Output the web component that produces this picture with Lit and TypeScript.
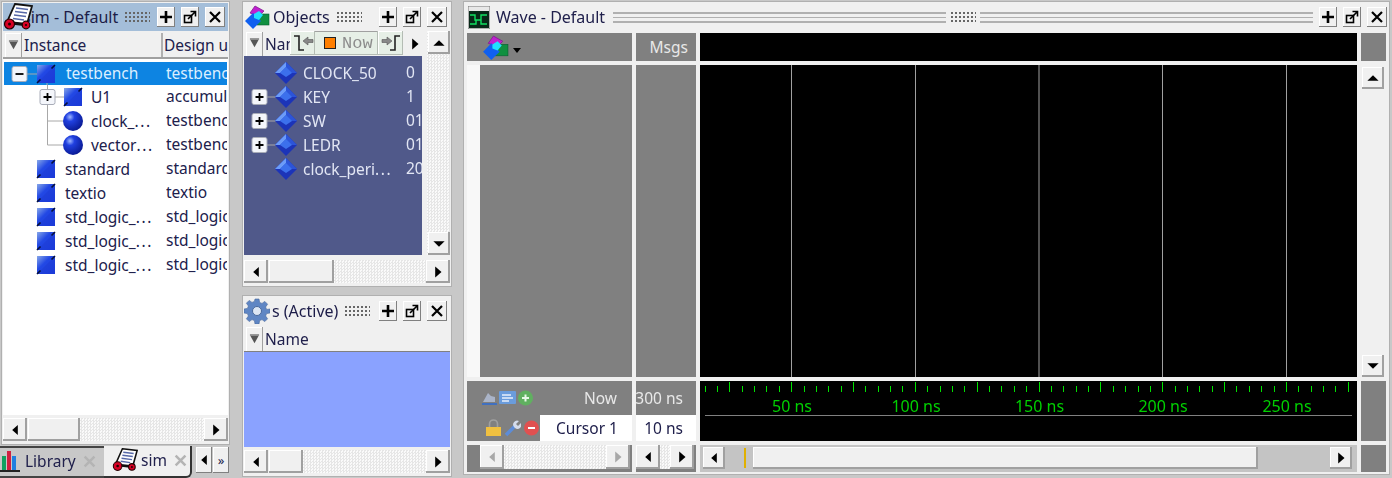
import { LitElement, html, css, svg } from "lit";
import { customElement } from "lit/decorators.js";

const ARROWS: Record<string, string> = {
  l: "M7 1.5 L3 5 L7 8.5 Z",
  r: "M3 1 L7.5 5 L3 9 Z",
  u: "M1 7 L5 3 L9 7 Z",
  d: "M1 3 L5 7 L9 3 Z",
};
const arr = (d: string, off = false) =>
  html`<svg class="arr ${off ? "off" : ""}" viewBox="0 0 10 10"><path d=${ARROWS[d]}></path></svg>`;

const btn = (d: string, off = false) => html`<div class="btn">${arr(d, off)}</div>`;

const hbar = (thumb: number, cls = "") =>
  html`<div class="hbar ${cls}">${btn("l")}<div class="thumb" style="width:${thumb}px"></div><div class="track"></div>${btn("r")}</div>`;

const winBtns = () => html`
  <div class="wb"><svg viewBox="0 0 16 16"><path d="M8 2v12M2 8h12" stroke="#000" stroke-width="2.6" fill="none"></path></svg></div>
  <div class="wb"><svg viewBox="0 0 16 16"><rect x="2.5" y="6.5" width="7" height="7" fill="none" stroke="#000" stroke-width="1.6"></rect><path d="M6 10 L13 3 M8.5 2.5h5v5" stroke="#000" stroke-width="1.6" fill="none"></path></svg></div>
  <div class="wb"><svg viewBox="0 0 16 16"><path d="M3 3 L13 13 M13 3 L3 13" stroke="#000" stroke-width="2.2" fill="none"></path></svg></div>`;

const simGlyph = () => svg`
  <path d="M12 2 L29 4 L24 22 L4 20 Z" fill="#fff" stroke="#111" stroke-width="1.8"></path>
  <path d="M13 6l12 1.5M12 9.5l12 1.5M11 13l12 1.5M10 16.5l11 1.5" stroke="#5668a8" stroke-width="1.6"></path>
  <path d="M6 21 L23 23" stroke="#111" stroke-width="2.4"></path>
  <circle cx="6.5" cy="22" r="5" fill="#d80024" stroke="#200" stroke-width="1.2"></circle><circle cx="6.5" cy="22" r="1.5" fill="#200"></circle>
  <circle cx="23" cy="23" r="3.8" fill="#d80024" stroke="#200" stroke-width="1.2"></circle><circle cx="23" cy="23" r="1.1" fill="#200"></circle>`;

const simIcon = () => html`<svg class="ic30" viewBox="0 0 30 30">${simGlyph()}</svg>`;

const objIcon = (cls = "ic26") => html`<svg class=${cls} viewBox="0 0 26 26">
  <path d="M6 9 L11 2 L20 7 L15 12 Z" fill="#c020d0" stroke="#802090" stroke-width=".8"></path>
  <rect x="13" y="10" width="12" height="11" fill="#109040" stroke="#086030" stroke-width=".6"></rect>
  <path d="M1 17 L9 9 L17 17 L9 25 Z" fill="#1060f0"></path>
  <path d="M10 10 L15 7 L19 11 L15 16 L10 14 Z" fill="#20e0ff"></path>
</svg>`;

const gearIcon = () => html`<svg class="ic26" viewBox="0 0 26 26">
  <g fill="#5f86c4" stroke="#48689c" stroke-width=".6">
    <path d="M11 1h4l.6 3.4 2.4 1 2.8-2 2.8 2.8-2 2.8 1 2.4L26 11v4l-3.4.6-1 2.4 2 2.8-2.8 2.8-2.8-2-2.4 1L15 26h-4l-.6-3.4-2.4-1-2.8 2-2.8-2.8 2-2.8-1-2.4L0 15v-4l3.4-.6 1-2.4-2-2.8 2.8-2.8 2.8 2 2.4-1z"></path>
  </g>
  <circle cx="13" cy="13" r="4.5" fill="#dce6f4" stroke="#48689c"></circle>
</svg>`;

const grip = () => html`<div class="grip"></div>`;

const dropBtn = () => html`<div class="drop"><svg viewBox="0 0 12 12"><path d="M1 1h10L6 10z" fill="#555"></path><path d="M1 1h10" stroke="#999" stroke-width="2"></path></svg></div>`;

const expander = (cx: number, cy: number, plus: boolean) => svg`
  <rect x=${cx - 7.5} y=${cy - 7.5} width="15" height="15" rx="2" fill="#f4f6fb" stroke="#a8acb8"></rect>
  <path d=${plus ? `M${cx - 4} ${cy}h8M${cx} ${cy - 4}v8` : `M${cx - 4} ${cy}h8`} stroke="#000" stroke-width="1.8"></path>`;

const square = (x: number) => svg`
  <rect x=${x} y="3" width="18" height="18" fill="url(#sq)"></rect>
  <path d="M${x + 18} 3v18h-18z" fill="#1a34c8" opacity=".3"></path>
  <path d="M${x} 21l3.5-3.5M${x + 18} 3l-3.5 3.5" stroke="#06103c" stroke-width="1.6"></path>`;

const sphere = (x: number) => svg`
  <circle cx=${x + 10} cy="12" r="10" fill="url(#sph)"></circle>`;

const diamond = (x: number) => svg`
  <path d="M${x + 11} 1 L${x + 22} 12 L${x + 11} 23 L${x} 12 Z" fill="#1c34b8"></path>
  <path d="M${x + 11} 1 L${x + 22} 12 H${x} Z" fill="#2c54d8"></path>
  <path d="M${x + 11} 1 L${x + 11} 6 L${x + 5} 12 H${x} Z" fill="#6c9cf8"></path>
  <path d="M${x + 11} 6 L${x + 17} 12 L${x + 11} 16 L${x + 5} 12 Z" fill="#3c70ec"></path>`;

const LINE = "#a8a8a8";

const label = (name: string) => {
  const [stem, rest] = name.split("…");
  return rest === undefined ? name : html`${stem}<span class="el">...</span>`;
};

interface TreeRow { g: number; draw: unknown; name: string; design: string; sel?: boolean }

const treeRows: TreeRow[] = [
  { g: 62, sel: true, name: "testbench", design: "testbench", draw: svg`
    <path d="M23 12h12M43 20v4" stroke=${LINE} fill="none"></path>${expander(15.5, 12, false)}${square(33)}` },
  { g: 87, name: "U1", design: "accumulator", draw: svg`
    <path d="M43.5 0v24M50 12h10" stroke=${LINE} fill="none"></path>${expander(43.5, 12, true)}${square(60)}` },
  { g: 87, name: "clock_…", design: "testbench", draw: svg`
    <path d="M43.5 0v24M43.5 12h16" stroke=${LINE} fill="none"></path>${sphere(59)}` },
  { g: 87, name: "vector…", design: "testbench", draw: svg`
    <path d="M43.5 0v12h16" stroke=${LINE} fill="none"></path>${sphere(59)}` },
  { g: 61, name: "standard", design: "standard", draw: square(33) },
  { g: 61, name: "textio", design: "textio", draw: square(33) },
  { g: 61, name: "std_logic_…", design: "std_logic_1164", draw: square(33) },
  { g: 61, name: "std_logic_…", design: "std_logic_arith", draw: square(33) },
  { g: 61, name: "std_logic_…", design: "std_logic_unsigned", draw: square(33) },
];

const objRows = [
  { n: "CLOCK_50", v: "0", e: false },
  { n: "KEY", v: "1", e: true },
  { n: "SW", v: "01", e: true },
  { n: "LEDR", v: "01", e: true },
  { n: "clock_peri…", v: "20", e: false },
];

const GRID = [791, 915, 1038.5, 1162, 1286];
const WAVE_X = 700;

const ticks = () => {
  const out: unknown[] = [];
  for (let i = 0; i < 53; i++) {
    const x = 729.3 - 2 * 12.37 + i * 12.37 - WAVE_X;
    const major = (i - 2) % 5 === 0;
    out.push(svg`<path d="M${Math.round(x) + 0.5} ${major ? 1 : 5}V11" stroke="#00e000" fill="none"></path>`);
  }
  return out;
};

@customElement("app-root")
export class AppRoot extends LitElement {
  static styles = css`
    :host { display: block; width: 1392px; height: 478px; overflow: hidden; background: #c8c8c8; font: 15.5px "Noto Sans", sans-serif; color: #20204c; }
    * { box-sizing: border-box; }
    .root { display: flex; height: 478px; filter: blur(0.45px); }
    .el { letter-spacing: 1.6px; }
    .left { width: 230px; flex: none; display: flex; flex-direction: column; margin-right: 12px; padding: 1px 0 0 1px; }
    .mid { width: 210px; flex: none; display: flex; flex-direction: column; margin-right: 11px; padding-top: 1px; }
    .panel { border: 1px solid #b0b0b0; background: #f0f0f0; padding: 1px; display: flex; flex-direction: column; overflow: hidden; flex: none; }
    .p-sim { height: 444px; }
    .p-obj { height: 286px; margin-bottom: 8px; }
    .p-proc { height: 182px; }
    .title { height: 28px; flex: none; display: flex; align-items: center; padding-right: 3px; }
    .title.act { background: #a4bed9; }
    .title .txt { white-space: nowrap; color: #1c1c48; font-size: 16px; }
    .ic30 { width: 30px; height: 30px; flex: none; position: relative; z-index: 1; }
    .ic26 { width: 26px; height: 26px; flex: none; }
    .grip { width: 26px; height: 12px; flex: none; background-image: radial-gradient(circle, #666 0.8px, transparent 1px); background-size: 4px 4px; margin: 0 1px 0 6px; }
    .wb { width: 18px; height: 20px; margin-left: 6px; flex: none; background: #f0f0f0; box-shadow: inset -1px -1px 0 #808080, inset 1px 1px 0 #fff; display: flex; align-items: center; justify-content: center; }
    .wb:last-child { width: 20px; }
    .wb svg { width: 16px; height: 16px; }
    .spring { flex: 1; }
    .head { height: 26px; flex: none; display: flex; align-items: center; background: #f0f0f0; border-bottom: 2px solid #a0a0a0; margin-top: 2px; position: relative; overflow: hidden; }
    .drop { width: 17px; height: 24px; flex: none; display: flex; align-items: center; justify-content: center; box-shadow: inset -1px 0 0 #a0a0a0, inset 1px 1px 0 #fff; margin: 0 2px 0 2px; }
    .drop svg { width: 11px; height: 11px; }
    .hcell { white-space: nowrap; flex: none; }
    .hsep { border-left: 2px solid #b0b0b0; height: 24px; flex: none; }
    .tree { flex: 1; min-height: 0; background: #fff; padding: 3px 1px 0 1px; overflow: hidden; }
    .row { display: grid; grid-template-columns: 162px 1fr; height: 24px; line-height: 23px; white-space: nowrap; overflow: hidden; }
    .row.sel { background: #0d84e2; color: #dbeeff; height: 23px; }
    .row .n { display: flex; align-items: center; overflow: hidden; }
    .row svg { height: 24px; flex: none; }
    .row .d { overflow: hidden; }
    .hbar { height: 23px; flex: none; display: flex; margin-top: 3px; margin-bottom: 2px; }
    .btn { width: 24px; height: 23px; flex: none; background: #f0f0f0; box-shadow: inset -2px -2px 0 #a0a0a0, inset 1px 1px 0 #fff; display: flex; align-items: center; justify-content: center; }
    .thumb { flex: none; height: 23px; margin-left: 1px; background: #f0f0f0; box-shadow: inset -2px -2px 0 #a0a0a0, inset 1px 1px 0 #fff; }
    .track { flex: 1; background-color: #f4f4f4; background-image: repeating-conic-gradient(#e6e6e6 0 25%, #fafafa 0 50%); background-size: 3px 3px; }
    .arr { width: 14px; height: 14px; fill: #000; }
    .arr.off { fill: #a8a8a8; }
    .tabs { flex: 1; min-height: 0; overflow: hidden; display: flex; align-items: stretch; margin: 1px 0 0 -1px; }
    .tab { display: flex; align-items: center; gap: 3px; white-space: nowrap; padding-bottom: 3px; }
    .tab.a { width: 104px; background: #c8c8c8; border-top: 2px solid #444; border-bottom: 2px solid #444; }
    .tab.b { width: 88px; background: #f0f0f0; border-right: 2px solid #333; border-bottom: 2px solid #333; border-radius: 0 0 6px 0; padding-left: 8px; }
    .tab .x { color: #b4b4b4; font-size: 18px; font-weight: 700; margin-left: 3px; line-height: 1; }
    .tabbtns { display: flex; gap: 1px; margin: 1px 0 5px 4px; }
    .tabbtns div { width: 16px; background: #f0f0f0; box-shadow: inset -1px -1px 0 #808080, inset 1px 1px 0 #fff; display: flex; align-items: center; justify-content: center; font-size: 13px; }
    .objwrap { flex: 1; display: flex; min-height: 0; gap: 5px; margin-top: 1px; }
    .objmain { flex: 1; display: flex; flex-direction: column; min-width: 0; }
    .objhead { height: 25px; margin-top: 0; border-bottom: none; }
    .objhead .tri { margin-left: auto; margin-right: 0; }
    .list { flex: 1; background: #50598a; color: #e2e6f4; overflow: hidden; padding-top: 5px; }
    .orow { display: grid; grid-template-columns: 162px 1fr; height: 24px; line-height: 23px; white-space: nowrap; overflow: hidden; }
    .orow .n { display: flex; align-items: center; overflow: hidden; }
    .orow svg { width: 59px; height: 24px; flex: none; }
    .vbar { width: 23px; flex: none; display: flex; flex-direction: column; padding-left: 1px; background-color: #f4f4f4; background-image: repeating-conic-gradient(#e6e6e6 0 25%, #fafafa 0 50%); background-size: 3px 3px; }
    .vbar .btn { width: 22px; }
    .vbar .sp { flex: 1; }
    .p-obj .hbar { margin-top: 5px; }
    .overlay { position: absolute; left: 46px; top: 0; width: 113px; height: 24px; background: #e6efe6; display: flex; box-shadow: inset 0 1px 0 #a0a0a0; z-index: 2; }
    .overlay .o { width: 25px; flex: none; display: flex; align-items: center; justify-content: center; box-shadow: inset -1px -1px 0 #b4bcb4, inset 1px 1px 0 #fff; }
    .overlay .o svg { width: 22px; height: 20px; }
    .overlay .c { flex: 1; display: flex; align-items: center; gap: 6px; padding-left: 9px; font: 17px "Liberation Mono", monospace; color: #8c8c8c; box-shadow: inset -1px -1px 0 #b4bcb4; }
    .sq { width: 12px; height: 12px; background: #ff8000; border: 1px solid #222; flex: none; }
    .phead { height: 24px; margin-top: 3px; }
    .plist { flex: 1; background: #8aa2ff; border-top: 1px solid #808080; }
    .wave { flex: 1; min-width: 0; padding: 1px 2px 0 0; }
    .p-wave { height: 474px; padding: 1px 0 0 3px; }
    .wtitle { height: 28px; flex: none; display: flex; align-items: center; padding-right: 2px; }
    .wtitle .txt { font-size: 16px; white-space: nowrap; margin: 0 8px 0 6px; }
    .wicon { width: 22px; height: 23px; flex: none; margin-left: 1px; }
    .groove { flex: 1; height: 11px; border-top: 2px solid #b0b0b0; border-bottom: 2px solid #b0b0b0; background: linear-gradient(#b0b0b0, #b0b0b0) center/100% 1px no-repeat; }
    .wgrid { display: grid; grid-template-columns: 165px 60px 657px 25px; grid-template-rows: 28px 312px 60px 27px; gap: 4px; margin-top: 2px; }
    .wtitle .grip { margin: 0 4px; }
    .g { background: #808080; color: #e8e8e8; }
    .k { background: #000; }
    .hd1 { display: flex; align-items: center; padding-left: 15px; }
    .hd1 .ic26 { width: 27px; height: 27px; }
    .hd1 i { border: 4px solid transparent; border-top: 5px solid #000; border-bottom: none; margin: 7px 0 0 4px; }
    .msgs { display: flex; align-items: center; justify-content: flex-end; padding-right: 8px; }
    .names { display: flex; }
    .names .wh { width: 13px; background: #f8f8f8; }
    .wv { display: block; }
    .vs { display: flex; flex-direction: column; padding: 2px 2px 0 1px; background: #f0f0f0; }
    .vs .btn { width: 22px; height: 22px; }
    .vs .sp { flex: 1; }
    .cur1 { display: flex; flex-direction: column; }
    .cr { flex: 1; display: flex; align-items: center; }
    .cr.top { justify-content: flex-end; padding-right: 15px; height: 34px; flex: none; position: relative; }
    .cr.bot { background: linear-gradient(90deg, #808080 73px, #fff 73px); }
    .cr.bot .ics { width: 73px; padding-left: 18px; display: flex; align-items: center; gap: 2px; flex: none; }
    .cr.top .ics { position: absolute; left: 14px; top: 8px; display: flex; gap: 1px; }
    .cr.bot span { flex: 1; text-align: center; color: #20204c; padding-left: 2px; }
    .ics svg { width: 17px; height: 18px; flex: none; }
    .val { display: flex; flex-direction: column; overflow: hidden; }
    .val div { white-space: nowrap; display: flex; align-items: center; justify-content: flex-end; padding-right: 13px; }
    .val .t { height: 34px; flex: none; }
    .val .b { flex: 1; background: #fff; color: #20204c; }
    .sb { display: flex; align-items: stretch; background: #808080; padding: 0 2px 3px 0; }
    .sb .btn { height: 24px; }
    .sb1 { padding-left: 13px; }
    .sb2 { padding-right: 2px; }
    .sb2 .btn { width: 24px; }
    .sb3 { background: #c4c4c4; padding: 2px 5px 3px 3px; }
    .sb3 .btn { width: 22px; height: 22px; }
    .sb3 .big { width: 505px; background: #f0f0f0; box-shadow: inset -2px -2px 0 #a0a0a0, inset 1px 1px 0 #fff; margin-left: 28px; position: relative; }
    .mark { position: absolute; left: -9px; top: 1px; width: 2px; height: 20px; background: #e0b000; }
    .lbl { font: 16px "Noto Sans", sans-serif; fill: #00d000; text-anchor: middle; }
  `;

  render() {
    return html`<div class="root">
      <div class="left">
        <div class="panel p-sim">
          <div class="title act">${simIcon()}<span class="txt" style="margin-left:-10px">sim - Default</span>${grip()}<div class="spring"></div>${winBtns()}</div>
          <div class="head">${dropBtn()}<div class="hcell" style="width:137px">Instance</div><div class="hsep"></div><div class="hcell" style="margin-left:1px">Design unit</div></div>
          <div class="tree">
            ${treeRows.map((r) => html`<div class="row ${r.sel ? "sel" : ""}"><div class="n">
              <svg style="width:${r.g}px" viewBox="0 0 ${r.g} 24">
                <defs><radialGradient id="sph" cx="35%" cy="30%" r="75%"><stop offset="0" stop-color="#a0b8ff"></stop><stop offset=".3" stop-color="#2040e0"></stop><stop offset="1" stop-color="#081890"></stop></radialGradient>
                <linearGradient id="sq" x1="0" y1="0" x2="1" y2="1"><stop offset="0" stop-color="#88a8e8"></stop><stop offset=".4" stop-color="#2248e4"></stop><stop offset="1" stop-color="#1c3ce0"></stop></linearGradient></defs>
                ${r.draw}
              </svg><span>${label(r.name)}</span></div><div class="d">${r.design}</div></div>`)}
          </div>
          ${hbar(52)}
        </div>
        <div class="tabs">
          <div class="tab a"><svg style="width:22px;height:26px;flex:none" viewBox="0 0 22 26"><rect x="2" y="8" width="4" height="14" fill="#10a060"></rect><rect x="7" y="3" width="4" height="19" fill="#d02040"></rect><rect x="12" y="8" width="4" height="14" fill="#2080e0"></rect><path d="M0 23h20" stroke="#222" stroke-width="2"></path></svg><span>Library</span><span class="x">✕</span></div>
          <div class="tab b"><svg style="width:26px;height:26px;flex:none" viewBox="0 0 30 30">${simGlyph()}</svg><span>sim</span><span class="x">✕</span></div>
          <div class="tabbtns"><div>${arr("l")}</div><div>»</div></div>
        </div>
      </div>
      <div class="mid">
        <div class="panel p-obj">
          <div class="title" style="height:27px">${objIcon()}<span class="txt" style="margin-left:3px">Objects</span>${grip()}<div class="spring"></div>${winBtns()}</div>
          <div class="objwrap">
            <div class="objmain">
              <div class="head objhead">${dropBtn()}<div class="hcell">Name</div>
                <div class="overlay">
                  <div class="o"><svg viewBox="0 0 22 20"><path d="M2 3h5v14h5" fill="none" stroke="#222" stroke-width="1.6"></path><path d="M11 8l5-4v2.5h5v3h-5V12z" fill="#888" stroke="#555" stroke-width=".6"></path></svg></div>
                  <div class="c"><div class="sq"></div>Now</div>
                  <div class="o"><svg viewBox="0 0 22 20"><path d="M20 3h-5v14h-5" fill="none" stroke="#222" stroke-width="1.6"></path><path d="M11 8l-5-4v2.5H1v3h5V12z" transform="translate(1 0)" fill="#888" stroke="#555" stroke-width=".6"></path></svg></div>
                </div>
                <svg class="arr tri" viewBox="0 0 10 10"><path d=${ARROWS.r}></path></svg>
              </div>
              <div class="list">
                ${objRows.map((o) => html`<div class="orow"><div class="n">
                  <svg viewBox="0 0 59 24">${o.e ? svg`<path d="M20 12h12" stroke="#a8a8a8" fill="none"></path>${expander(15.5, 12, true)}` : ""}${diamond(31)}</svg><span>${label(o.n)}</span></div><div>${o.v}</div></div>`)}
              </div>
            </div>
            <div class="vbar">${btn("u")}<div class="sp"></div>${btn("d")}</div>
          </div>
          ${hbar(65)}
        </div>
        <div class="panel p-proc">
          <div class="title" style="height:27px">${gearIcon()}<span class="txt" style="margin-left:2px">s (Active)</span>${grip()}<div class="spring"></div>${winBtns()}</div>
          <div class="head phead" style="border-bottom:none">${dropBtn()}<div class="hcell">Name</div></div>
          <div class="plist"></div>
          ${hbar(34)}
        </div>
      </div>
      <div class="wave">
        <div class="panel p-wave">
          <div class="wtitle">
            <svg class="wicon" viewBox="0 0 22 23"><rect x="0" y="0" width="22" height="23" fill="#e8e8e8" stroke="#777"></rect><rect x="1" y="5" width="20" height="17" fill="#082818"></rect><path d="M2 9h5v5h6v-5h6M2 18h6v-4h5v4h6" stroke="#10e060" stroke-width="1.4" fill="none"></path></svg>
            <span class="txt">Wave - Default</span>
            <div class="groove"></div>${grip()}<div class="groove"></div>
            ${winBtns()}
          </div>
          <div class="wgrid">
            <div class="g hd1">${objIcon()}<i></i></div>
            <div class="g msgs">Msgs</div>
            <div class="k"></div>
            <div class="g"></div>

            <div class="names"><div class="wh"></div><div class="g" style="flex:1"></div></div>
            <div class="g"></div>
            <div class="k"><svg class="wv" width="657" height="312">${GRID.map((x) => svg`<path d="M${x - WAVE_X + 0.5} 0V312" stroke="#a0a0a0" fill="none"></path>`)}</svg></div>
            <div class="vs">${btn("u")}<div class="sp"></div>${btn("d")}</div>

            <div class="g cur1">
              <div class="cr top"><div class="ics">
                <svg viewBox="0 0 17 18"><path d="M2 13l5-9 3 3 4 1v5z" fill="#aab4c8"></path><path d="M1 15h15" stroke="#4070c0" stroke-width="2"></path></svg>
                <svg viewBox="0 0 17 18"><rect x="0" y="2" width="17" height="13" rx="1" fill="#6a9cdc"></rect><path d="M3 6h9M3 9h11M3 12h7" stroke="#e8f0fc" stroke-width="1.4"></path></svg>
                <svg viewBox="0 0 17 18"><circle cx="8.5" cy="9" r="7.5" fill="#60b060"></circle><path d="M8.5 5.5v7M5 9h7" stroke="#e8f8e8" stroke-width="2"></path></svg>
              </div>Now</div>
              <div class="cr bot"><div class="ics">
                <svg viewBox="0 0 17 18"><rect x="1" y="8" width="15" height="9" fill="#f0c040"></rect><path d="M4.5 8V5a4 4 0 0 1 8 0v3" stroke="#a0a0a0" stroke-width="1.6" fill="none"></path></svg>
                <svg viewBox="0 0 17 18"><path d="M2 16L11 7" stroke="#5c8cd8" stroke-width="3.6"></path><path d="M10 8 A4 4 0 0 1 15 2 L12 5 L14 7 L17 4 A4 4 0 0 1 11 9 Z" fill="#d4dcec"></path></svg>
                <svg viewBox="0 0 17 18"><circle cx="8.5" cy="9" r="7.5" fill="#e05050"></circle><path d="M5 9h7" stroke="#fff" stroke-width="2"></path></svg>
              </div><span>Cursor 1</span></div>
            </div>
            <div class="g val"><div class="t">300 ns</div><div class="b">10 ns</div></div>
            <div class="k"><svg class="wv" width="657" height="60">${ticks()}
              ${[50, 100, 150, 200, 250].map((n, i) => svg`<text class="lbl" x=${GRID[i] - WAVE_X + 1} y="31">${n} ns</text>`)}
              <path d="M5 34.5H652" stroke="#808080" fill="none"></path></svg></div>
            <div class="g"></div>

            <div class="sb sb1">${btn("l", true)}<div class="track"></div>${btn("r", true)}</div>
            <div class="sb sb2">${btn("l")}<div class="track"></div>${btn("r")}</div>
            <div class="sb sb3">${btn("l")}<div class="big"><div class="mark"></div></div><div class="spring"></div>${btn("r")}</div>
            <div class="g"></div>
          </div>
        </div>
      </div>
    </div>`;
  }
}
